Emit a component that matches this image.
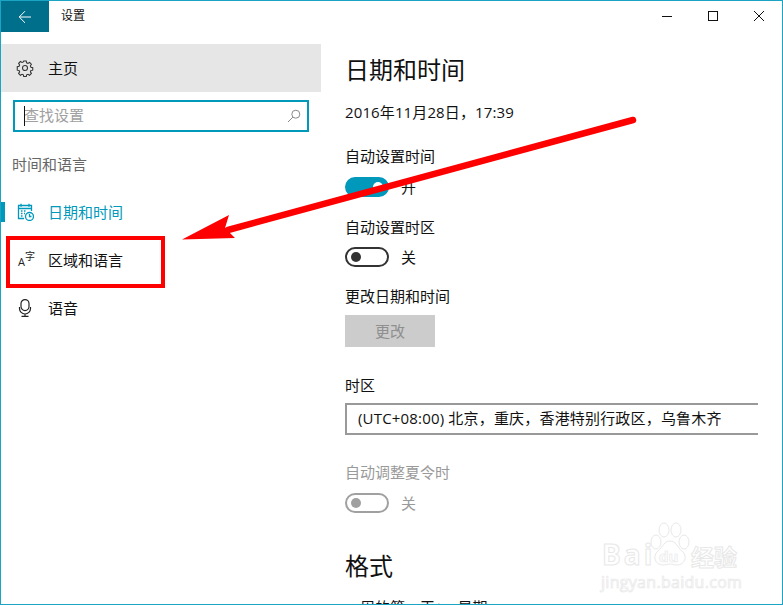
<div class="window">
  <header class="titlebar">
    <button class="back" aria-label="返回">
      <svg width="14" height="14" viewBox="0 0 14 14" fill="none" stroke="#fff" stroke-width="1"><path d="M13 7H1.5M7 1.2 1.2 7 7 12.8" /></svg>
    </button>
    <span class="apptitle">设置</span>
    <div class="winctl">
      <span class="ctl"><svg width="12" height="12" viewBox="0 0 12 12" fill="none" stroke="#111"><path d="M1 5.500h10" /></svg></span>
      <span class="ctl"><svg width="12" height="12" viewBox="0 0 12 12" fill="none" stroke="#111"><rect x="1.500" y="0.500" width="9" height="9" /></svg></span>
      <span class="ctl"><svg width="12" height="12" viewBox="0 0 12 12" fill="none" stroke="#111"><path d="M1 0l10 10M11 0 1 10" /></svg></span>
    </div>
  </header>

  <div class="body">
    <aside class="side">
      <div class="home">
        <svg class="ic" width="18" height="18" viewBox="-1 -1 20 20" fill="none" stroke="#333" stroke-width="1.200">
          <circle cx="9" cy="9" r="2.800" />
          <path d="M7.600 1.200h2.800l.4 2 1.500.7 1.800-1.100 2 2-1.100 1.800.6 1.500 2 .5v2.800l-2 .4-.6 1.500 1.100 1.800-2 2-1.800-1.100-1.500.6-.4 2H7.600l-.4-2-1.500-.6-1.800 1.100-2-2 1.100-1.800-.6-1.500-2-.4V7.600l2-.5.6-1.500-1.100-1.800 2-2 1.800 1.100 1.500-.7z" />
        </svg>
        <span>主页</span>
      </div>
      <div class="search">
        <i class="caret"></i>
        <span class="ph lift">查找设置</span>
        <svg width="14" height="14" viewBox="0 0 14 14" fill="none" stroke="#8a8a8a"><circle cx="8.800" cy="5.200" r="4" /><path d="M5.900 8.100 1 13" /></svg>
      </div>
      <div class="grouplabel">时间和语言</div>
      <nav class="nav">
        <div class="item active">
          <i class="marker"></i>
          <svg class="ic" width="18" height="18" viewBox="0 0 18 18" fill="none" stroke="#0099bc" stroke-width="1.300">
            <path d="M8 15.500H2.500v-13h13V8" />
            <path d="M2.500 5.500h13M5 .8v3M13 .8v3" />
            <path d="M5 8h1.500M8 8h1.500M5 10.500h1.500M8 10.500h1M5 13h1.500" stroke-width="1.500" />
            <circle cx="13.500" cy="13.500" r="4" />
            <path d="M13.500 11v2.500h2" />
          </svg>
          <span>日期和时间</span>
        </div>
        <div class="item">
          <span class="lang ic"><b>A</b><em>字</em></span>
          <span>区域和语言</span>
        </div>
        <div class="item">
          <svg class="ic" width="18" height="18" viewBox="0 0 18 18" fill="none" stroke="#222" stroke-width="1.200">
            <rect x="5" y="0.600" width="8" height="11" rx="4" />
            <path d="M3.500 8v1.500a5.500 5.500 0 0 0 11 0V8M9 15v2.300M5.500 17.300h7" />
          </svg>
          <span>语音</span>
        </div>
      </nav>
    </aside>

    <main class="main">
      <h1>日期和时间</h1>
      <p class="now latin">2016年11月28日，17:39</p>

      <div class="label first">自动设置时间</div>
      <div class="toggle-row gap11">
        <span class="toggle on"><i></i></span><span>开</span>
      </div>

      <div class="label second">自动设置时区</div>
      <div class="toggle-row">
        <span class="toggle"><i></i></span><span>关</span>
      </div>

      <div class="label third">更改日期和时间</div>
      <div class="change">更改</div>

      <div class="label tz">时区</div>
      <div class="select latin">(UTC+08:00) 北京，重庆，香港特别行政区，乌鲁木齐</div>

      <div class="label dst disabled">自动调整夏令时</div>
      <div class="toggle-row gap11 disabled">
        <span class="toggle"><i></i></span><span>关</span>
      </div>

      <h2>格式</h2>
      <p class="week">一周的第一天：　星期一</p>
    </main>
  </div>

  <div class="redbox"></div>
  <svg class="arrow" width="783" height="605" viewBox="0 0 783 605">
    <path d="M633 120 228 230" stroke="#fe0000" stroke-width="6.500" stroke-linecap="round" fill="none" />
    <path d="M182 239.500 229 215 225 228 235 238 Z" fill="#fe0000" />
  </svg>
  <div class="watermark">
    <svg class="paw" width="44" height="46" viewBox="0 0 44 46" fill="#fff" stroke="#e8e8e8">
      <ellipse cx="8" cy="20" rx="5" ry="7" />
      <ellipse cx="16" cy="8" rx="5" ry="7" />
      <ellipse cx="28" cy="8" rx="5" ry="7" />
      <ellipse cx="36" cy="20" rx="5" ry="7" />
      <path d="M22 19c-6 0-7 6-12 10-6 5-3 14 5 14 3 0 5-1 7-1s4 1 7 1c8 0 11-9 5-14-5-4-6-10-12-10z" />
    </svg>
    <div class="wm1">Bai</div>
    <div class="wmdu">du</div>
    <div class="wmcn">经验</div>
    <div class="wm2">jingyan.baidu.com</div>
  </div>
</div>

<style>
  :global(body) { margin: 0; background: #fff; }
  .window {
    position: relative;
    box-sizing: border-box;
    width: 783px;
    height: 605px;
    border: 1px solid #1ca4c4;
    overflow: hidden;
    background: #fff;
    color: #111;
    font-family: "Noto Sans CJK SC", "Open Sans", sans-serif;
    font-size: 15px;
    line-height: 20px;
  }
  .latin { font-family: "Open Sans", "Noto Sans CJK SC", sans-serif; }
  .titlebar { display: flex; align-items: center; height: 31px; }
  .back {
    width: 48px; height: 31px; border: 0; padding: 0;
    background: #006f8b;
    display: flex; align-items: center; justify-content: center;
  }
  .apptitle { margin: -3px 0 0 12px; font-size: 12px; }
  .winctl { margin-left: auto; display: flex; }
  .ctl { width: 46px; height: 31px; display: flex; align-items: center; justify-content: center; }

  .body { display: flex; }
  .side { width: 320px; flex: none; padding-top: 12px; }
  .home {
    display: flex; align-items: center; height: 48px; background: #e6e6e6;
  }
  .lift { margin-top: -2px; }
  .ic { margin-left: 15px; margin-right: 14px; flex: none; }
  .search {
    box-sizing: border-box;
    display: flex; align-items: center;
    margin: 8px 0 0 12px;
    width: 296px; height: 32px;
    border: 2px solid #0099bc;
    padding: 0 6px 0 9px;
    position: relative;
  }
  .caret { position: absolute; left: 9px; top: 4px; width: 1px; height: 20px; background: #111; }
  .ph { flex: 1; color: #a0a0a0; }
  .grouplabel { margin: 22px 0 0 11px; color: #666; height: 20px; }
  .nav { margin-top: 14px; }
  .item { position: relative; display: flex; align-items: center; height: 48px; }
  .item.active { color: #0099bc; }
  .marker { position: absolute; left: 0; top: 14px; width: 4px; height: 20px; background: #0099bc; }
  .lang { position: relative; display: block; width: 18px; height: 18px; color: #222; }
  .lang b { position: absolute; left: 2px; top: 5px; font: 400 11px/12px "Open Sans", sans-serif; }
  .lang em { position: absolute; left: 9px; top: 0; font: normal 10px/10px "Noto Sans CJK SC", sans-serif; }

  .main { flex: 1; padding-left: 24px; min-width: 0; }
  h1 { margin: 20px 0 0; font-size: 24px; font-weight: 400; line-height: 34px; }
  .now { margin: 16px 0 0; height: 20px; letter-spacing: .12px; }
  .label { height: 20px; }
  .first { margin-top: 24px; }
  .second { margin-top: 20px; }
  .third { margin-top: 19px; }
  .tz { margin-top: 28px; }
  .dst { margin-top: 27px; }
  .disabled { color: #9a9a9a; }
  .toggle-row { display: flex; align-items: center; gap: 12px; height: 20px; margin-top: 10px; }
  .gap11 { margin-top: 11px; }
  .toggle {
    box-sizing: border-box; position: relative; display: block;
    width: 44px; height: 20px; border: 2px solid #333; border-radius: 10px;
  }
  .toggle i { position: absolute; left: 4px; top: 3px; width: 10px; height: 10px; border-radius: 50%; background: #333; }
  .toggle.on { background: #0099bc; border-color: #0099bc; }
  .toggle.on i { left: auto; right: 4px; background: #fff; }
  .disabled .toggle { border-color: #a0a0a0; }
  .disabled .toggle i { background: #a0a0a0; }
  .change {
    margin-top: 9px; width: 90px; height: 32px; background: #ccc; color: #8f8f8f;
    display: flex; align-items: center; justify-content: center;
  }
  .select {
    box-sizing: border-box;
    margin-top: 8px; width: 413px; height: 32px;
    border: 2px solid #999; border-right: 0;
    padding: 3px 0 0 11px;
    line-height: 20px;
    letter-spacing: .18px;
    white-space: nowrap;
  }
  h2 { margin: 35px 0 0; font-size: 24px; font-weight: 400; line-height: 34px; }
  .week { margin: 15px 0 0 0; white-space: nowrap; }

  .redbox {
    position: absolute; left: 5px; top: 235px; width: 159px; height: 52px;
    box-sizing: border-box; border: 4px solid #fe0000;
  }
  .arrow { position: absolute; left: -1px; top: -1px; }
  .watermark {
    position: absolute; left: 600px; top: 520px; width: 145px; height: 70px;
    pointer-events: none;
  }
  .paw { position: absolute; left: 47px; top: 1px; }
  .wm1, .wmdu, .wmcn, .wm2 { position: absolute; color: #fff; white-space: nowrap; }
  .wm1 {
    left: 1px; top: 19px;
    font: 700 28px/28px "Open Sans", sans-serif;
    letter-spacing: 3px;
    -webkit-text-stroke: 1px #e8e8e8;
  }
  .wmdu {
    left: 58px; top: 27px;
    font: 700 15px/16px "Open Sans", sans-serif;
    -webkit-text-stroke: .7px #e8e8e8;
  }
  .wmcn {
    left: 90px; top: 22px;
    font: 700 23px/26px "Noto Sans CJK SC", sans-serif;
    -webkit-text-stroke: 1px #e8e8e8;
  }
  .wm2 {
    left: 0; top: 52px;
    font: 400 16px/18px "Open Sans", sans-serif; letter-spacing: .3px;
    -webkit-text-stroke: .7px #e8e8e8;
  }
</style>
